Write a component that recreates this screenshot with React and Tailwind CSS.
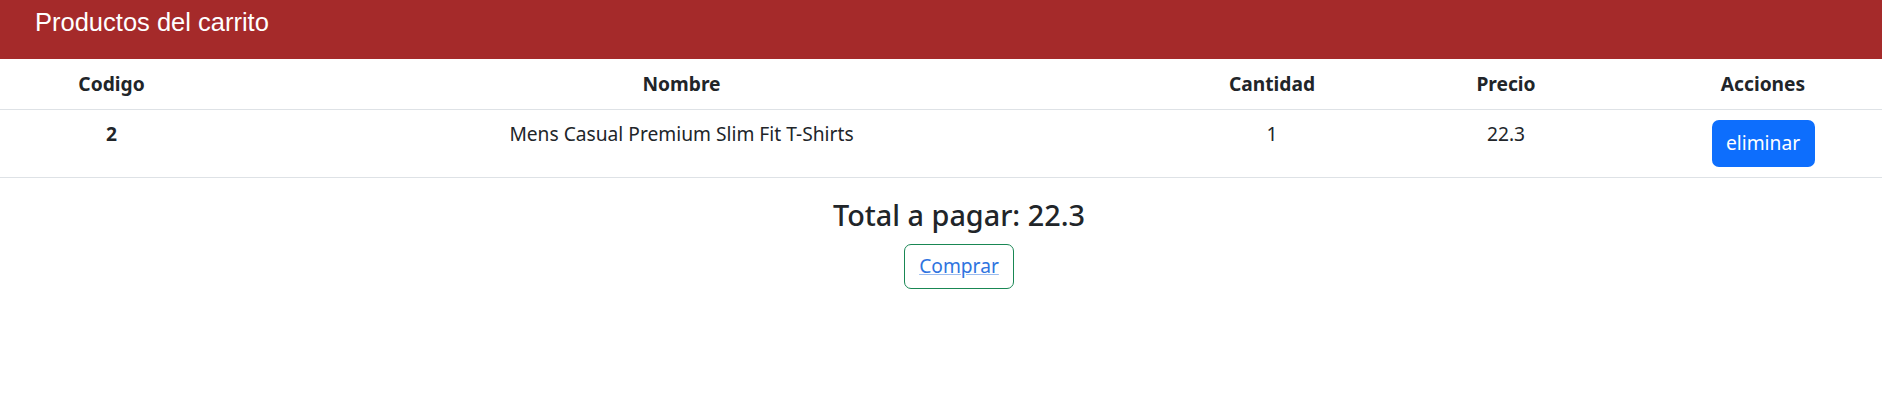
import React from 'react'

const items = [{ id: 2, title: 'Mens Casual Premium Slim Fit T-Shirts', qty: 1, price: 22.3 }]

const cols = 'grid grid-cols-[223px_917px_264px_204px_274px]'

export default function App() {
  const total = items.reduce((acc, p) => acc + p.price * p.qty, 0)
  return (
    <div className="min-h-[400px] bg-white text-[#212529] font-['Noto_Sans',sans-serif] text-[19.2px]">
      <div className="h-[59px] bg-[#a52a2a] pl-[35px] pt-[3px] text-white text-[25.5px] font-['Liberation_Sans',Arial,sans-serif]">
        Productos del carrito
      </div>

      <div className={`${cols} h-[51px] border-b border-[#dee2e6] text-center font-bold items-center`}>
        <div>Codigo</div>
        <div>Nombre</div>
        <div>Cantidad</div>
        <div>Precio</div>
        <div className="pl-[36px]">Acciones</div>
      </div>

      {items.map((p) => (
        <div key={p.id} className={`${cols} h-[68px] border-b border-[#dee2e6] text-center leading-[28.8px] pt-[10px]`}>
          <div className="font-bold">{p.id}</div>
          <div>{p.title}</div>
          <div>{p.qty}</div>
          <div>{p.price}</div>
          <div className="flex justify-center pl-[36px]">
            <button className="h-[47px] w-[103px] rounded-[7px] bg-[#0d6efd] text-white">eliminar</button>
          </div>
        </div>
      ))}

      <div className="flex flex-col items-center pl-[36px] pt-[20px]">
        <h4 className="text-[28.8px] font-medium leading-[34.6px]">Total a pagar: {total}</h4>
        <button className="mt-[11px] h-[45px] w-[110px] rounded-[7px] border border-[#198754]">
          <a href="#" className="text-[#2f74e0] underline decoration-[#9bbcf0]">Comprar</a>
        </button>
      </div>
    </div>
  )
}
